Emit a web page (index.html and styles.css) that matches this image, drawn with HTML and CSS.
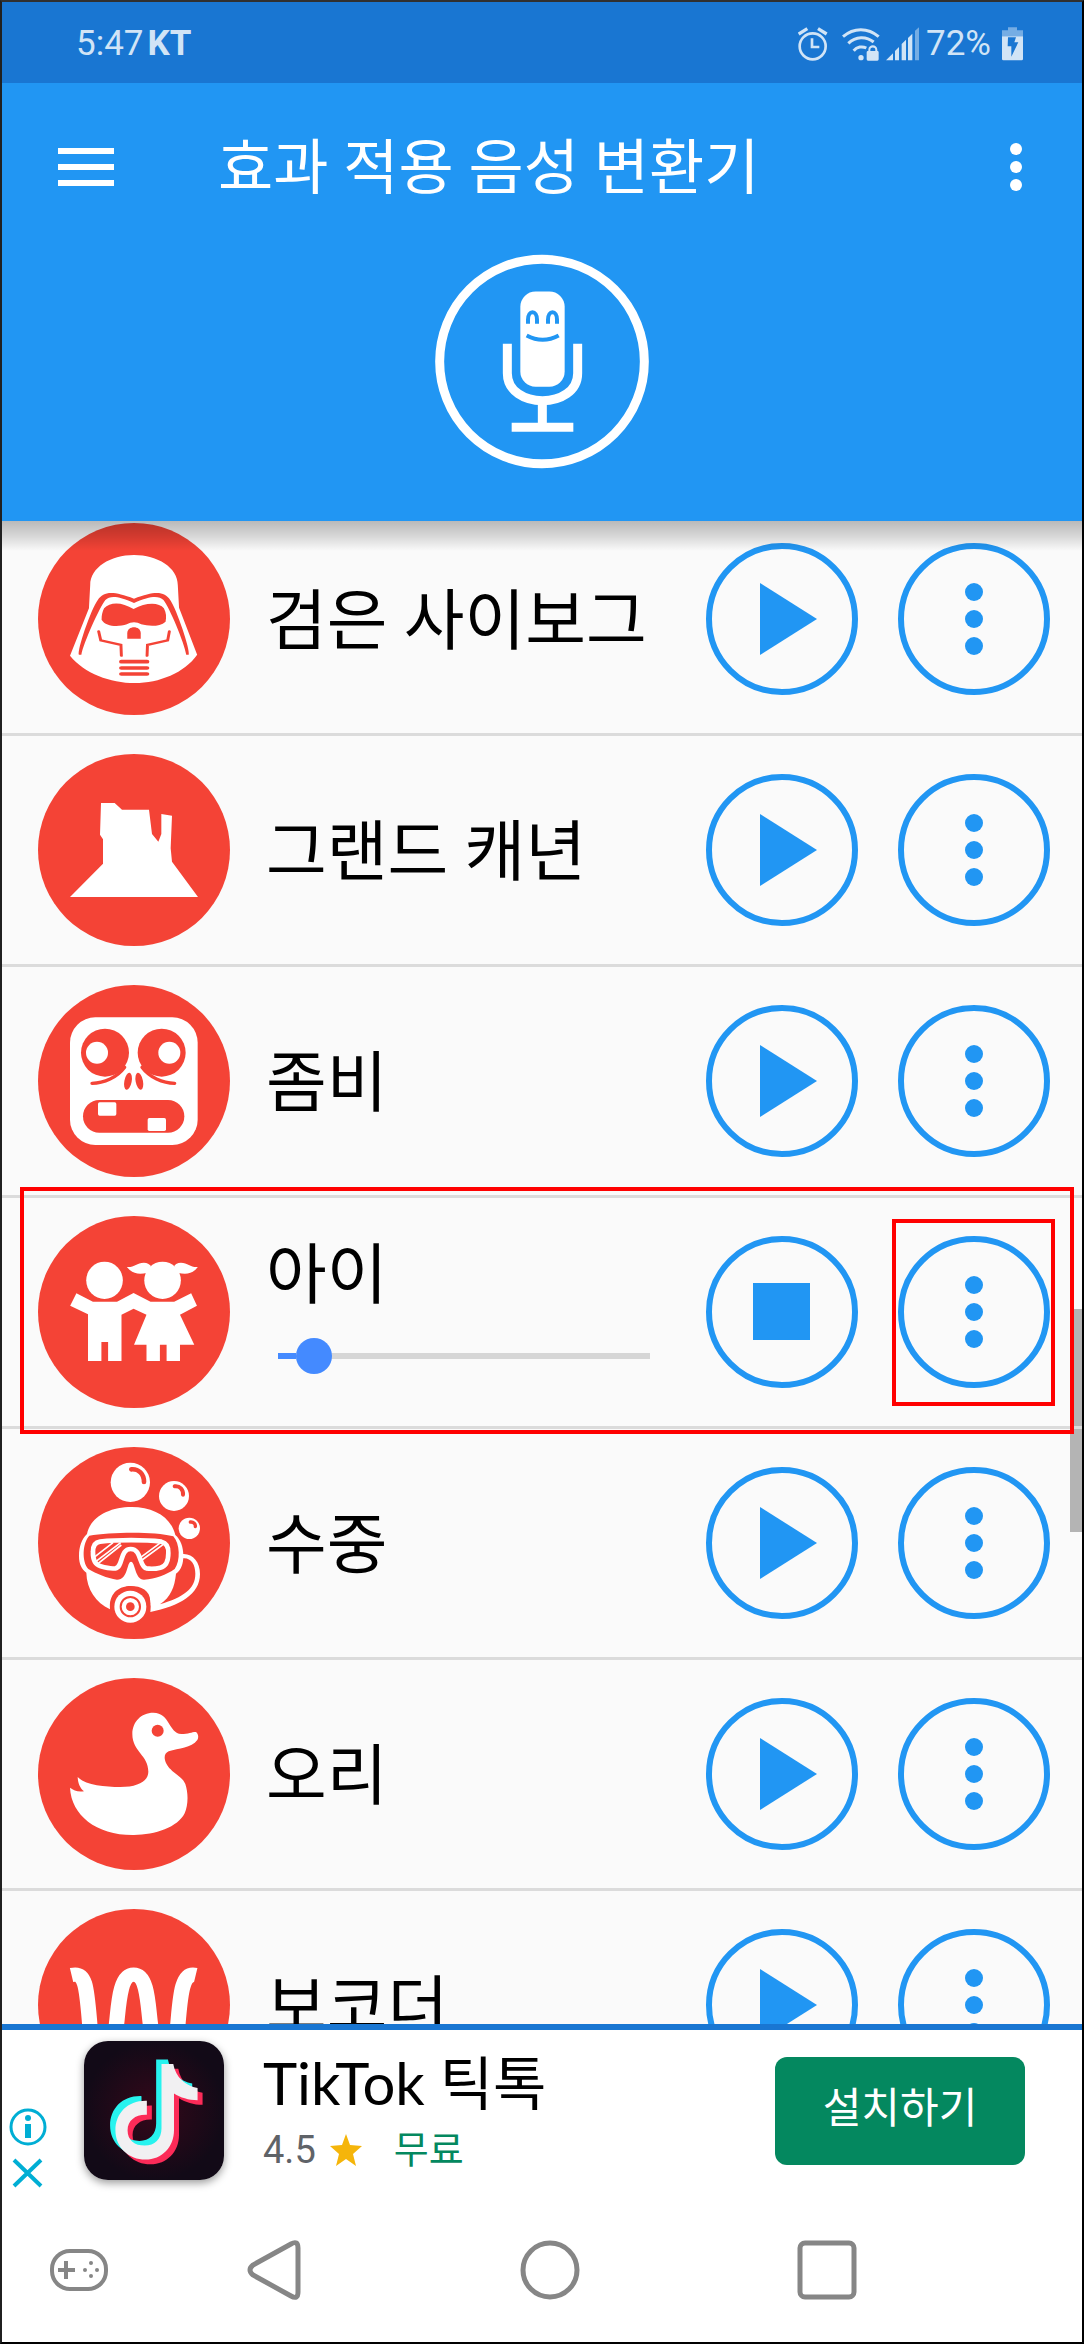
FILE: index.html
```html
<!DOCTYPE html>
<html lang="ko">
<head>
<meta charset="utf-8">
<meta name="viewport" content="width=device-width">
<title>효과 적용 음성 변환기</title>
<link rel="stylesheet" href="styles.css">
</head>
<body>
<svg class="defs" aria-hidden="true">
  <symbol id="play" viewBox="0 0 152 152"><path d="M54 40l57 36-57 36z"/></symbol>
  <symbol id="stop" viewBox="0 0 152 152"><path d="M47 47h57v57H47z"/></symbol>
  <symbol id="dots" viewBox="0 0 152 152"><circle cx="76" cy="49" r="9"/><circle cx="76" cy="76" r="9"/><circle cx="76" cy="103" r="9"/></symbol>
</svg>
<div class="app">
  <div class="status">
    <div class="status-left"><span>5:47</span><b>KT</b></div>
    <div class="status-right">
      <svg width="38" height="34" viewBox="291 77 114 102" aria-label="알람"><g fill="none" stroke="currentColor" stroke-width="8"><circle cx="335" cy="135" r="39"/><path d="M333 111v26h22"/><path d="M293 98l26-16M351 82l26 16" stroke-width="10"/></g></svg>
      <svg width="38" height="34" viewBox="422 77 114 102" aria-label="와이파이"><g fill="none" stroke="currentColor" stroke-width="9"><path d="M425 106c32-28 75-28 107 0"/><path d="M441 126c22-22 54-22 76 -4"/><path d="M457 148c10-12 26-14 38-8"/></g><g fill="currentColor"><circle cx="479" cy="169" r="8"/><path d="M496 153c0-3 2-4 5-4v-4c0-18 27-18 27 0v4c2 0 4 1 4 4v21q0 4-4 4h-28q-4 0-4-4zm11-4h15v-4c0-9-15-9-15 0z"/></g></svg>
      <svg width="34" height="34" viewBox="555 77 102 102" aria-label="신호"><path fill="currentColor" d="M555 177l21-21v21zM582 149l12-12v40h-12zM602 128l13-13v62h-13zM621 110l13-13v80h-13z"/><path fill="currentColor" opacity=".5" d="M642 88l12-10v99h-12z"/></svg>
      <span>72%</span>
      <svg width="26" height="34" viewBox="891 77 78 102" aria-label="배터리"><path fill="currentColor" opacity=".5" d="M906 105V87h18v-9h27v9h18v18z"/><path fill="currentColor" fill-rule="evenodd" d="M906 105h63v68q0 4-4 4h-55q-4 0-4-4zm18 3l-1 27h11v31l21-43h-12l5-15z"/></svg>
    </div>
  </div>

  <header class="header">
    <div class="toolbar">
      <button class="icon-btn" aria-label="메뉴"><svg width="56" height="38" viewBox="0 0 56 38"><path fill="#fff" d="M0 0h56v6H0zM0 16h56v6H0zM0 32h56v6H0z"/></svg></button>
      <h1 class="title">효과 적용 음성 변환기</h1>
      <button class="icon-btn" aria-label="더보기"><svg width="12" height="48" viewBox="0 0 12 48"><g fill="#fff"><circle cx="6" cy="6" r="6"/><circle cx="6" cy="24" r="6"/><circle cx="6" cy="42" r="6"/></g></svg></button>
    </div>
    <button class="mic" aria-label="녹음">
      <svg width="214" height="215" viewBox="105 43 642 644"><circle cx="426" cy="365" r="307" fill="none" stroke="#fff" stroke-width="27"/><rect x="361" y="155" width="133" height="286" rx="46" fill="#fff"/><g fill="none" stroke="#2196f3" stroke-width="12"><path d="M384 252v-12c0-30 27-30 27 0v12M444 252v-12c0-30 27-30 27 0v12"/><path d="M380 287q48 26 96 0"/></g><path fill="none" stroke="#fff" stroke-width="27" d="M322 312v88c0 110 211 110 211 0v-88M427 484v78M335 562h185"/></svg>
    </button>
  </header>

  <main class="viewport">
    <ul class="effects">
      <li class="row">
        <svg class="avatar" viewBox="90 39 456 576" preserveAspectRatio="none"><ellipse cx="318" cy="327" rx="228" ry="288" fill="#f44336"/><path fill="#fff" d="M214 225c0-52 48-90 104-90s104 38 104 90l3 68 43 141c-30 54-90 85-148 85s-120-29-154-82l45-142z"/><path fill="#f44336" d="M187 434C183 420 215 300 232 270C246 244 268 242 318 266C368 242 390 244 404 270C420 300 452 420 448 434H442C438 400 402 292 388 270C376 256 356 258 318 279C280 258 262 256 250 270C236 292 198 400 193 434z"/><path fill="#f44336" d="M247 295c14-20 42-20 70 2c28-20 60-22 72-2c6 14 6 26 4 40c-14 16-40 14-58 8c-10-8-24-8-34 0c-20 8-50 8-60-14c0-14 2-24 6-34z"/><path fill="#f44336" d="M302 386v-16c0-24 32-24 32 0v16z"/><g fill="none" stroke="#f44336" stroke-width="7" stroke-linecap="round"><path d="M234 364l5 27 48 14 1 32M402 364l-4 27-48 14-1 32"/></g><g stroke="#f44336" stroke-width="11" stroke-linecap="round"><path d="M288 455h61M288 474h61M288 492h61"/></g></svg>
        <div class="info"><span class="name">검은 사이보그</span></div>
        <button class="round" aria-label="재생"><svg><use href="#play"/></svg></button>
        <button class="round" aria-label="옵션"><svg><use href="#dots"/></svg></button>
      </li>
      <li class="row">
        <svg class="avatar" viewBox="114 42 576 576"><circle cx="402" cy="330" r="288" fill="#f44336"/><path fill="#fff" d="M303 189h41l22 20h81l9 73 19 23 9-23v-60l32 5-4 98 4 40 78 106H210l99-100v-73l-9-14z"/></svg>
        <div class="info"><span class="name">그랜드 캐년</span></div>
        <button class="round" aria-label="재생"><svg><use href="#play"/></svg></button>
        <button class="round" aria-label="옵션"><svg><use href="#dots"/></svg></button>
      </li>
      <li class="row">
        <svg class="avatar" viewBox="114 735 576 576"><circle cx="402" cy="1023" r="288" fill="#f44336"/><rect x="210" y="832" width="383" height="383" rx="76" fill="#fff"/><g fill="#f44336"><circle cx="315" cy="938" r="72"/><circle cx="485" cy="938" r="72"/><ellipse cx="384" cy="1024" rx="11" ry="26" transform="rotate(11 384 1024)"/><ellipse cx="418" cy="1024" rx="11" ry="26" transform="rotate(-11 418 1024)"/><rect x="249" y="1080" width="304" height="98" rx="49"/></g><g fill="none" stroke="#f44336" stroke-width="10" stroke-linecap="round"><path d="M276 1030c36 0 76-18 98-48M524 1030c-36 0-76-18-98-48"/></g><g fill="#fff"><circle cx="291" cy="938" r="33"/><circle cx="508" cy="938" r="33"/><rect x="294" y="1087" width="55" height="40" rx="5"/><rect x="443" y="1134" width="55" height="39" rx="5"/></g></svg>
        <div class="info"><span class="name">좀비</span></div>
        <button class="round" aria-label="재생"><svg><use href="#play"/></svg></button>
        <button class="round" aria-label="옵션"><svg><use href="#dots"/></svg></button>
      </li>
      <li class="row row-active">
        <svg class="avatar" viewBox="85 108 430 576" preserveAspectRatio="none"><ellipse cx="300" cy="396" rx="215" ry="288" fill="#f44336"/><g fill="#fff"><ellipse cx="234" cy="301" rx="41" ry="56"/><ellipse cx="364" cy="301" rx="41" ry="56"/><path d="M284 261c16 2 22-12 38-13c8 0 12 4 16 10l-8 20c-20 8-34 2-46-17zM443 261c-16 2-22-12-38-13c-8 0-12 4-15 10l8 20c20 8 34 2 45-17z"/><path d="M171 340l37 25h54l37-26 38 26h53l38-25 13 37-38 27 32 90h-32v49h-30v-49h-15v49h-30v-49h-28l28-90-29-18-27 18v139h-30v-57h-15v57h-30V403l-40-26z"/></g></svg>
        <div class="info">
          <label class="name" for="progress">아이</label>
          <input class="slider" id="progress" type="range" min="0" max="56" value="3">
        </div>
        <button class="round" aria-label="정지"><svg><use href="#stop"/></svg></button>
        <div class="marked"><button class="round" aria-label="옵션"><svg><use href="#dots"/></svg></button></div>
      </li>
      <li class="row">
        <svg class="avatar" viewBox="114 51 576 576"><circle cx="402" cy="339" r="288" fill="#f44336"/><g fill="#fff"><circle cx="391" cy="157" r="59"/><circle cx="522" cy="198" r="45"/><circle cx="568" cy="295" r="32"/></g><g fill="none" stroke="#f44336" stroke-linecap="round"><path stroke-width="14" d="M394 118c22-2 38 14 38 38"/><path stroke-width="12" d="M524 169c16-2 26 10 25 25"/><path stroke-width="10" d="M571 276c10-1 16 6 15 14"/></g><path fill="#fff" d="M261 312c10-50 65-81 134-81c66 0 118 30 131 84c16 14 24 36 24 62c0 24-6 42-22 54c-4 40-16 70-48 92c70-22 106-46 106-92c0-28-14-48-36-46l-2-13c30-2 52 24 52 60c0 62-62 96-149 114l-1-22c6-40-24-56-58-56s-66 20-62 70c-42-20-70-60-71-110c-14-10-22-26-22-50c0-28 8-50 24-66z"/><path fill="#f44336" d="M268 317c60-10 190-14 252 2c20 22 22 74 4 98c-26 18-56 30-92 32c-28 0-26-54-39-54s-8 54-42 54c-30-4-62-18-86-32c-20-22-18-78 3-100z"/><path fill="none" stroke="#fff" stroke-width="14" d="M300 335c54-6 134-6 184 0c16 4 22 14 21 34c0 22-6 40-24 44c-16 4-30 4-42 2c-22-6-14-58-47-58s-22 54-46 58c-14 2-30-2-44-6c-20-6-24-22-23-44c0-18 6-28 21-30z"/><path fill="none" stroke="#fff" stroke-width="5" d="M285 380l54-42M288 394l74-56M294 401l70-56M422 382l60-44M426 390l68-50"/><circle cx="391" cy="530" r="61" fill="#f44336"/><circle cx="391" cy="530" r="48" fill="#fff"/><circle cx="391" cy="530" r="29" fill="none" stroke="#f44336" stroke-width="6"/><circle cx="391" cy="530" r="13" fill="#f44336"/></svg>
        <div class="info"><span class="name">수중</span></div>
        <button class="round" aria-label="재생"><svg><use href="#play"/></svg></button>
        <button class="round" aria-label="옵션"><svg><use href="#dots"/></svg></button>
      </li>
      <li class="row">
        <svg class="avatar" viewBox="114 744 576 576"><circle cx="402" cy="1032" r="288" fill="#f44336"/><path fill="#fff" d="M397 912c0-36 26-64 63-64c50 0 46 62 84 64c22 0 34-7 44-6c8 6 8 18 4 24c-18 24-56 24-86 34c-22 10-10 38 6 54c16 18 34 22 44 44c10 30 8 64-2 88c-20 42-92 66-156 65c-110 0-184-60-188-142c12 8 22 14 42 11c-14-12-18-26-19-43c22 24 80 30 128 30c54 0 84-18 84-46c0-50-48-60-48-113z"/><circle cx="473" cy="902" r="18" fill="#f44336"/></svg>
        <div class="info"><span class="name">오리</span></div>
        <button class="round" aria-label="재생"><svg><use href="#play"/></svg></button>
        <button class="round" aria-label="옵션"><svg><use href="#dots"/></svg></button>
      </li>
      <li class="row">
        <svg class="avatar" viewBox="106 87 538 576" preserveAspectRatio="none"><ellipse cx="375" cy="375" rx="269" ry="288" fill="#f44336"/><path fill="none" stroke="#fff" stroke-width="43" d="M200 285C240 276 242 320 251 432Q262 560 288 560T326 432C332 380 334 284 374 284S414 380 421 432Q436 560 460 560T498 432C505 350 508 276 548 285"/></svg>
        <div class="info"><span class="name">보코더</span></div>
        <button class="round" aria-label="재생"><svg><use href="#play"/></svg></button>
        <button class="round" aria-label="옵션"><svg><use href="#dots"/></svg></button>
      </li>
    </ul>
    <div class="scrollbar"></div>
  </main>

  <aside class="ad">
    <div class="ad-choices">
      <button class="icon-btn" aria-label="광고 정보"><svg width="38" height="38" viewBox="0 0 38 38"><circle cx="19" cy="19" r="17" fill="none" stroke="#00aed4" stroke-width="3"/><circle cx="19" cy="10" r="3" fill="#00aed4"/><path fill="#00aed4" d="M16 16h6v14h-6z"/></svg></button>
      <button class="icon-btn" aria-label="광고 닫기"><svg width="38" height="30" viewBox="0 0 38 30"><path d="M5 2l27 26M32 2L5 28" stroke="#00aed4" stroke-width="4"/></svg></button>
    </div>
    <svg class="ad-icon" viewBox="235 483 392 416" preserveAspectRatio="none">
      <defs><path id="note" d="M452 552h33c6 40 35 66 68 72v36c-25 0-48-8-66-20V750c0 50-34 88-80 88s-84-36-84-88s36-90 88-88v42c-30-2-54 16-54 46s20 46 48 46s47-20 47-52z"/><radialGradient id="ink"><stop offset="0" stop-color="#35081a"/><stop offset="1" stop-color="#120a17"/></radialGradient></defs>
      <rect x="235" y="483" width="392" height="416" fill="url(#ink)"/>
      <use href="#note" x="14" y="14" fill="#fc2b58"/><use href="#note" x="-15" y="-14" fill="#27f3ef"/><use href="#note" fill="#f1f0f2"/>
    </svg>
    <div class="ad-text">
      <div class="ad-title">TikTok 틱톡</div>
      <div class="ad-meta"><span>4.5</span><svg width="32" height="32" viewBox="0 0 32 32"><path fill="#f5b50a" d="M16 0l4 11 12 1-9 8 3 12-10-7-10 7 3-12-9-8 12-1z"/></svg><span class="free">무료</span></div>
    </div>
    <button class="install">설치하기</button>
  </aside>

  <nav class="navbar">
    <button class="icon-btn" aria-label="게임 도구"><svg width="58" height="42" viewBox="0 0 58 42"><rect x="2" y="2" width="54" height="38" rx="18" fill="none" stroke="#868686" stroke-width="4"/><path d="M8 21h17M16 12v18" stroke="#868686" stroke-width="4"/><g fill="#868686"><circle cx="41" cy="14" r="2"/><circle cx="35" cy="21" r="2"/><circle cx="47" cy="21" r="2"/><circle cx="41" cy="27" r="2"/></g></svg></button>
    <button class="icon-btn" aria-label="뒤로"><svg width="54" height="60" viewBox="0 0 54 60"><path d="M44 4Q51 0 51 8V52Q51 60 44 56L6 35Q0 30 6 25z" fill="none" stroke="#868686" stroke-width="5"/></svg></button>
    <button class="icon-btn" aria-label="홈"><svg width="60" height="60" viewBox="0 0 60 60"><circle cx="30" cy="30" r="27" fill="none" stroke="#868686" stroke-width="5"/></svg></button>
    <button class="icon-btn" aria-label="최근 앱"><svg width="60" height="60" viewBox="0 0 60 60"><rect x="3" y="3" width="54" height="54" rx="5" fill="none" stroke="#868686" stroke-width="5"/></svg></button>
  </nav>
</div>
</body>
</html>
```
FILE: styles.css
```css
* { box-sizing: border-box; }

body {
  margin: 0;
  font-family: Roboto, "Noto Sans CJK KR", sans-serif;
  color: #000;
}

button {
  margin: 0;
  padding: 0;
  border: 0;
  background: none;
  font: inherit;
}

svg { display: block; flex: none; }

.defs { position: absolute; width: 0; height: 0; }

.app {
  display: flex;
  flex-direction: column;
  height: 100vh;
  border: 2px solid;
  border-color: #303030 #000 #000 #202020;
  background: #fff;
  overflow: hidden;
}

/* Status bar */
.status {
  flex: none;
  display: flex;
  justify-content: space-between;
  align-items: center;
  height: 81px;
  padding: 2px 59px 0 74px;
  background: #1976d2;
  color: #d1e4f6;
  font-size: 35px;
  line-height: 40px;
}

.status-left { display: flex; gap: 4px; }

.status-right { display: flex; align-items: center; gap: 6px; }

/* Header */
.header {
  flex: none;
  display: flex;
  flex-direction: column;
  align-items: center;
  padding-bottom: 52px;
  background: #2196f3;
}

.toolbar {
  align-self: stretch;
  display: flex;
  align-items: center;
  height: 168px;
  padding: 0 60px 0 56px;
}

.title {
  flex: 1;
  margin: 0 0 0 104px;
  padding-top: 4px;
  color: #fff;
  font-size: 60px;
  font-weight: 400;
  line-height: 84px;
}

.icon-btn { display: grid; place-items: center; }

.mic { margin-top: 3px; border-radius: 50%; }

/* Effect list */
.viewport {
  position: relative;
  flex: 1;
  min-height: 0;
  overflow: hidden;
  background: #fafafa;
}

.viewport::before {
  content: "";
  position: absolute;
  z-index: 1;
  inset: 0 0 auto;
  height: 30px;
  background: linear-gradient(rgba(0, 0, 0, .26), rgba(0, 0, 0, .14) 50%, rgba(0, 0, 0, 0));
}

.effects {
  margin: -16px 0 0;
  padding: 0;
  list-style: none;
}

.row {
  position: relative;
  display: flex;
  align-items: center;
  gap: 40px;
  height: 231px;
  padding: 0 32px 0 36px;
  border-bottom: 3px solid #dbdbdb;
}

.avatar { width: 192px; height: 192px; }

.info {
  flex: 1;
  display: flex;
  flex-direction: column;
  gap: 14px;
  margin-left: -4px;
}

.name {
  padding-top: 6px;
  font-size: 66px;
  line-height: 96px;
  white-space: nowrap;
}

.round {
  flex: none;
  width: 152px;
  height: 152px;
  border: 6px solid #2196f3;
  border-radius: 50%;
}

.round svg {
  width: 152px;
  height: 152px;
  margin: -6px;
  fill: #2196f3;
}

.slider {
  appearance: none;
  height: 36px;
  margin: 0 16px 0 12px;
  background: linear-gradient(90deg, #448aff 18px, #d6d6d6 18px) center / 100% 6px no-repeat;
}

.slider::-webkit-slider-thumb {
  appearance: none;
  width: 36px;
  height: 36px;
  border-radius: 50%;
  background: #448aff;
}

/* Red frames over the active row and its options button */
.row-active::after,
.marked::after {
  content: "";
  position: absolute;
  border: 4px solid #f00;
  pointer-events: none;
}

.row-active { z-index: 2; }

.row-active .info { padding-bottom: 28px; }

.row-active::after { inset: -11px 8px -8px 18px; }

.marked { position: relative; }

.marked::after { inset: -17px -5px -18px -6px; }

.scrollbar {
  position: absolute;
  z-index: 1;
  top: 788px;
  right: 0;
  width: 12px;
  height: 223px;
  background: rgba(0, 0, 0, .28);
}

/* Advert */
.ad {
  flex: none;
  display: flex;
  align-items: flex-start;
  height: 174px;
  padding: 11px 57px 0 7px;
  border-top: 6px solid #1976d2;
}

.ad-choices {
  display: flex;
  flex-direction: column;
  gap: 12px;
  padding-top: 67px;
}

.ad-icon {
  width: 140px;
  height: 139px;
  margin: 0 39px 0 37px;
  border-radius: 24px;
  box-shadow: 0 3px 8px rgba(0, 0, 0, .4);
}

.ad-text { flex: 1; }

.ad-title {
  font-family: Lato, "Noto Sans CJK KR", sans-serif;
  font-size: 58px;
  line-height: 84px;
}

.ad-meta {
  display: flex;
  align-items: center;
  gap: 14px;
  color: #5f6368;
  font-size: 38px;
  line-height: 50px;
}

.free { margin-left: 18px; color: #04885f; }

.install {
  width: 250px;
  height: 108px;
  margin-top: 16px;
  padding-bottom: 14px;
  border-radius: 12px;
  background: #04885f;
  color: #fff;
  font-size: 42px;
}

/* System navigation */
.navbar {
  flex: none;
  display: grid;
  grid-template-columns: 114px repeat(3, 1fr);
  height: 144px;
  padding: 0 117px 0 20px;
}
```
